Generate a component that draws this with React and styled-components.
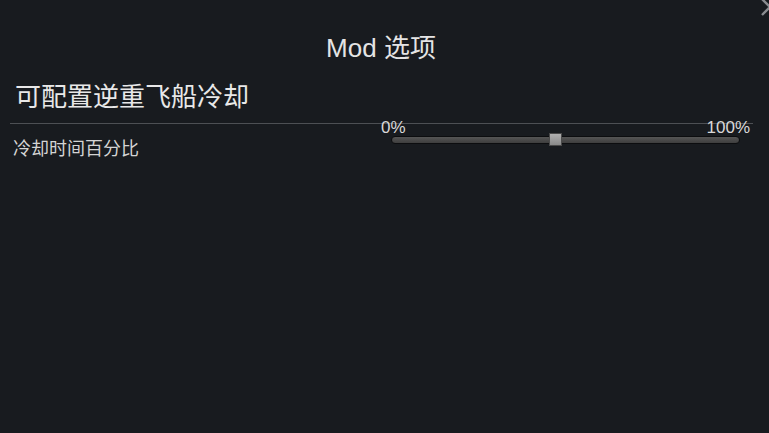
import React from 'react';
import styled, { createGlobalStyle } from 'styled-components';

const GlobalStyle = createGlobalStyle`
  html, body {
    margin: 0;
    padding: 0;
    background: #181b1f;
  }
  body {
    font-family: "Liberation Sans", "Noto Sans CJK SC", sans-serif;
    color: #e2e2e2;
  }
`;

const Panel = styled.div`
  position: relative;
  width: 769px;
  height: 433px;
  overflow: hidden;
  background: #181b1f;
  padding: 31px 19px 0 10px;
  box-sizing: border-box;
`;

const CloseButton = styled.div`
  position: absolute;
  top: -4px;
  right: -12px;
  width: 22px;
  height: 22px;
`;

const Title = styled.h1`
  margin: 0 0 0 2px;
  font-size: 26px;
  font-weight: 400;
  line-height: 34px;
  text-align: center;
  color: #e4e4e4;
`;

const SectionHeader = styled.h2`
  margin: 0 -3px 0 0;
  padding: 16px 0 10px 5px;
  font-size: 26px;
  font-weight: 400;
  line-height: 32px;
  color: #e8e8e8;
  border-bottom: 1px solid #4d5054;
`;

const OptionRow = styled.div`
  display: flex;
  align-items: flex-start;
  justify-content: space-between;
`;

const OptionLabel = styled.div`
  padding: 14px 0 0 3px;
  font-size: 18px;
  line-height: 22px;
  color: #d4d4d4;
`;

const SliderBox = styled.div`
  width: 369px;
  margin-top: -5px;
  display: flex;
  flex-direction: column;
`;

const RangeLabels = styled.div`
  display: flex;
  justify-content: space-between;
  font-size: 17px;
  line-height: 18px;
  color: #d8d8d8;
`;

const Track = styled.div`
  position: relative;
  margin: -1px 10px 0 10px;
  height: 6px;
  border-radius: 4px;
  background: linear-gradient(#555, #3e3e3e);
  border: 1px solid #0c0d0f;
`;

const Thumb = styled.div`
  position: absolute;
  top: -4px;
  width: 11px;
  height: 11px;
  background: linear-gradient(#b0b0b0, #8a8a8a);
  border: 1px solid #4a4a4a;
`;

const Slider = ({ value }) => (
  <SliderBox>
    <RangeLabels>
      <span>0%</span>
      <span>100%</span>
    </RangeLabels>
    <Track>
      <Thumb style={{ left: `calc(${value}% - ${(value / 100) * 13}px)` }} />
    </Track>
  </SliderBox>
);

const App = () => (
  <>
    <GlobalStyle />
    <Panel>
      <CloseButton>
        <svg width="22" height="22" viewBox="0 0 22 22">
          <path d="M3 3 L19 19 M19 3 L3 19" stroke="#8a8c90" strokeWidth="2.4" />
        </svg>
      </CloseButton>
      <Title>Mod 选项</Title>
      <SectionHeader>可配置逆重飞船冷却</SectionHeader>
      <OptionRow>
        <OptionLabel>冷却时间百分比</OptionLabel>
        <Slider value={47} />
      </OptionRow>
    </Panel>
  </>
);

export default App;
